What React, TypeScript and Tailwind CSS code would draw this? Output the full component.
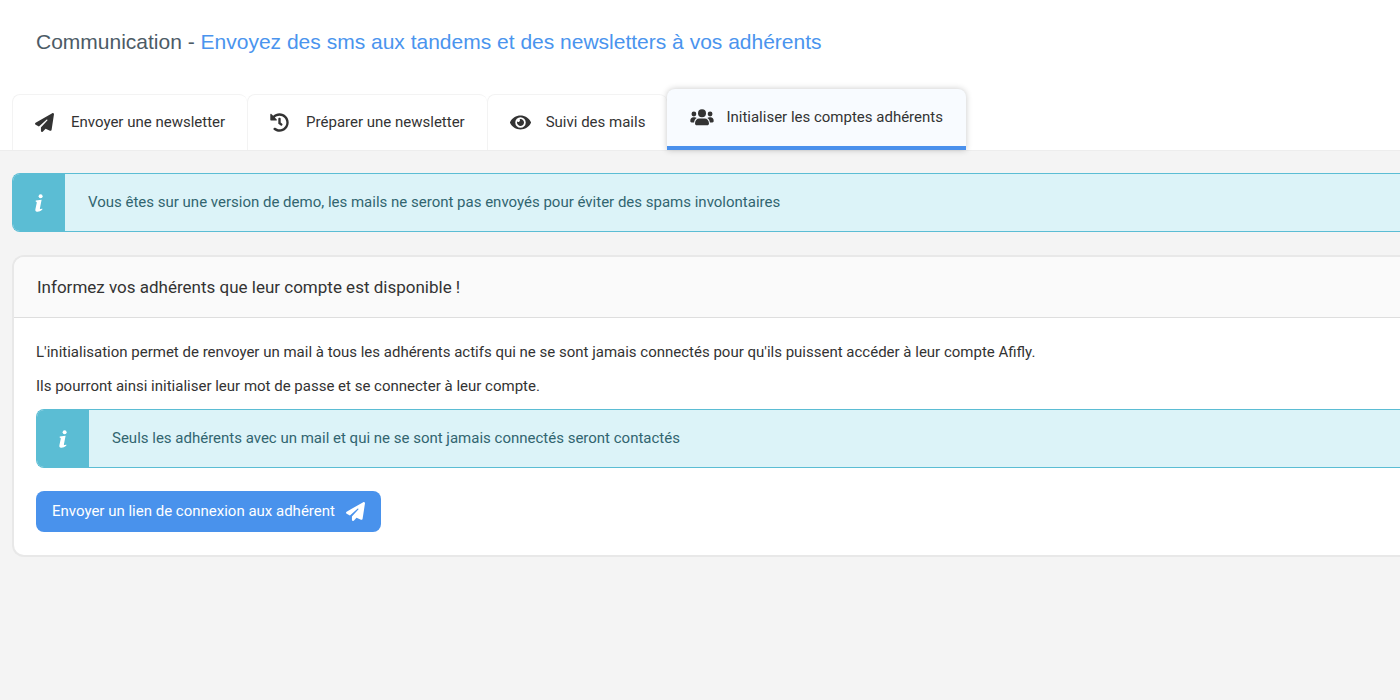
import type { ReactNode } from "react";
import { FaEye, FaHistory } from "react-icons/fa";
import { FaPaperPlane } from "react-icons/fa6";
import clsx from "clsx";

interface IconProps {
  className?: string;
}

interface Tab {
  label: string;
  icon: (props: IconProps) => ReactNode;
  iconClass: string;
  active?: boolean;
}

function UsersIcon({ className }: IconProps) {
  return (
    <svg viewBox="0 0 24 17" fill="currentColor" className={className} aria-hidden="true">
      <circle cx="12" cy="4.3" r="4" />
      <circle cx="3.9" cy="5" r="2.4" />
      <circle cx="20.1" cy="5" r="2.4" />
      <path d="M5 14.4C5 11.4 6.8 9.4 9.2 9.4h5.6c2.4 0 4.2 2 4.2 5 0 1.2-.8 1.8-1.8 1.8H6.8C5.8 16.2 5 15.6 5 14.4z" />
      <path d="M.3 12C.3 9.6 1.6 8.3 3.4 8.3h1.2c.9 0 1.6.3 2.1.8C5.2 10.100 4.300 11.600 4.100 13.400H1.600C.8 13.400.3 12.900.3 12z" />
      <path d="M23.700 12c0-2.400-1.300-3.700-3.100-3.700h-1.200c-.9 0-1.600.3-2.100.8 1.500 1 2.400 2.500 2.600 4.300h2.500c.8 0 1.300-.5 1.300-1.400z" />
    </svg>
  );
}

function InfoIcon({ className }: IconProps) {
  return (
    <svg viewBox="0 0 8 18" fill="currentColor" className={className} aria-hidden="true">
      <circle cx="5.600" cy="2.200" r="2" />
      <path d="M.8 6.500 6.600 5.700 4.900 14.500c-.1.800.8.700 2.300 0l.2 1.100C5.500 17.300 3.600 18 2 17.800.6 17.600.1 16.700.4 15.200L1.700 9c.2-1-.2-1.200-1.100-1.400z" />
    </svg>
  );
}

const tabs: Tab[] = [
  { label: "Envoyer une newsletter", icon: FaPaperPlane, iconClass: "size-[19px]" },
  { label: "Préparer une newsletter", icon: FaHistory, iconClass: "size-[19px]" },
  { label: "Suivi des mails", icon: FaEye, iconClass: "size-[21px]" },
  { label: "Initialiser les comptes adhérents", icon: UsersIcon, iconClass: "h-[17px] w-6", active: true },
];

function TabBar() {
  return (
    <div role="tablist" className="flex items-end pl-3">
      {tabs.map(({ label, icon: Icon, iconClass, active }) => (
        <button
          key={label}
          type="button"
          role="tab"
          aria-selected={!!active}
          className={clsx(
            "flex items-center gap-3 rounded-t-lg text-[15px] whitespace-nowrap text-[#333]",
            active
              ? "z-10 h-[61px] border-b-4 border-[#4a90ec] bg-[#f8fbff] px-[23px] shadow-[0_0_6px_rgba(0,0,0,0.22)]"
              : "h-14 border-t border-l border-[#f3f3f3] bg-white px-[22px]"
          )}
        >
          <span className="flex w-6">
            <Icon className={iconClass} />
          </span>
          {label}
        </button>
      ))}
    </div>
  );
}

function InfoAlert({ children }: { children: ReactNode }) {
  return (
    <div role="alert" className="flex h-[59px] overflow-hidden rounded-l-lg border border-r-0 border-[#5bbdd4] bg-[#dcf3f8]">
      <div className="flex w-13 items-center justify-center bg-[#5bbdd4] text-white">
        <InfoIcon className="h-[18px] w-2" />
      </div>
      <p className="flex items-center px-[23px] text-[15px] text-[#316570]">{children}</p>
    </div>
  );
}

export default function App() {
  return (
    <div className="min-h-screen overflow-hidden bg-[#f4f4f4] font-[Roboto,sans-serif] text-[#333]">
      <header className="border-b border-[#ededed] bg-white pt-7">
        <h1 className="mb-[33px] px-9 font-['Liberation_Sans',sans-serif] text-[21px] leading-7 text-[#4c5b66]">
          Communication - <span className="text-[#4a94ee]">Envoyez des sms aux tandems et des newsletters à vos adhérents</span>
        </h1>
        <TabBar />
      </header>

      <main className="space-y-[23px] pt-[22px] pl-3">
        <InfoAlert>
          Vous êtes sur une version de demo, les mails ne seront pas envoyés pour éviter des spams involontaires
        </InfoAlert>

        <section className="overflow-hidden rounded-l-xl border-2 border-r-0 border-[#e8e8e8] bg-white">
          <h2 className="border-b border-[#dedede] bg-[#fafafa] px-[23px] py-[18px] text-[17px] leading-6">
            Informez vos adhérents que leur compte est disponible !
          </h2>
          <div className="py-[23px] pl-[22px]">
            <p className="mb-3 text-[15px] leading-[22px]">
              L'initialisation permet de renvoyer un mail à tous les adhérents actifs qui ne se sont jamais connectés pour qu'ils puissent accéder à leur compte Afifly.
            </p>
            <p className="mb-3 text-[15px] leading-[22px]">
              Ils pourront ainsi initialiser leur mot de passe et se connecter à leur compte.
            </p>
            <InfoAlert>Seuls les adhérents avec un mail et qui ne se sont jamais connectés seront contactés</InfoAlert>
            <button
              type="button"
              className="mt-[23px] flex h-[41px] items-center gap-[11px] rounded-lg bg-[#4992ec] px-4 text-[15px] text-white"
            >
              Envoyer un lien de connexion aux adhérent
              <FaPaperPlane className="size-[19px]" />
            </button>
          </div>
        </section>
      </main>
    </div>
  );
}
